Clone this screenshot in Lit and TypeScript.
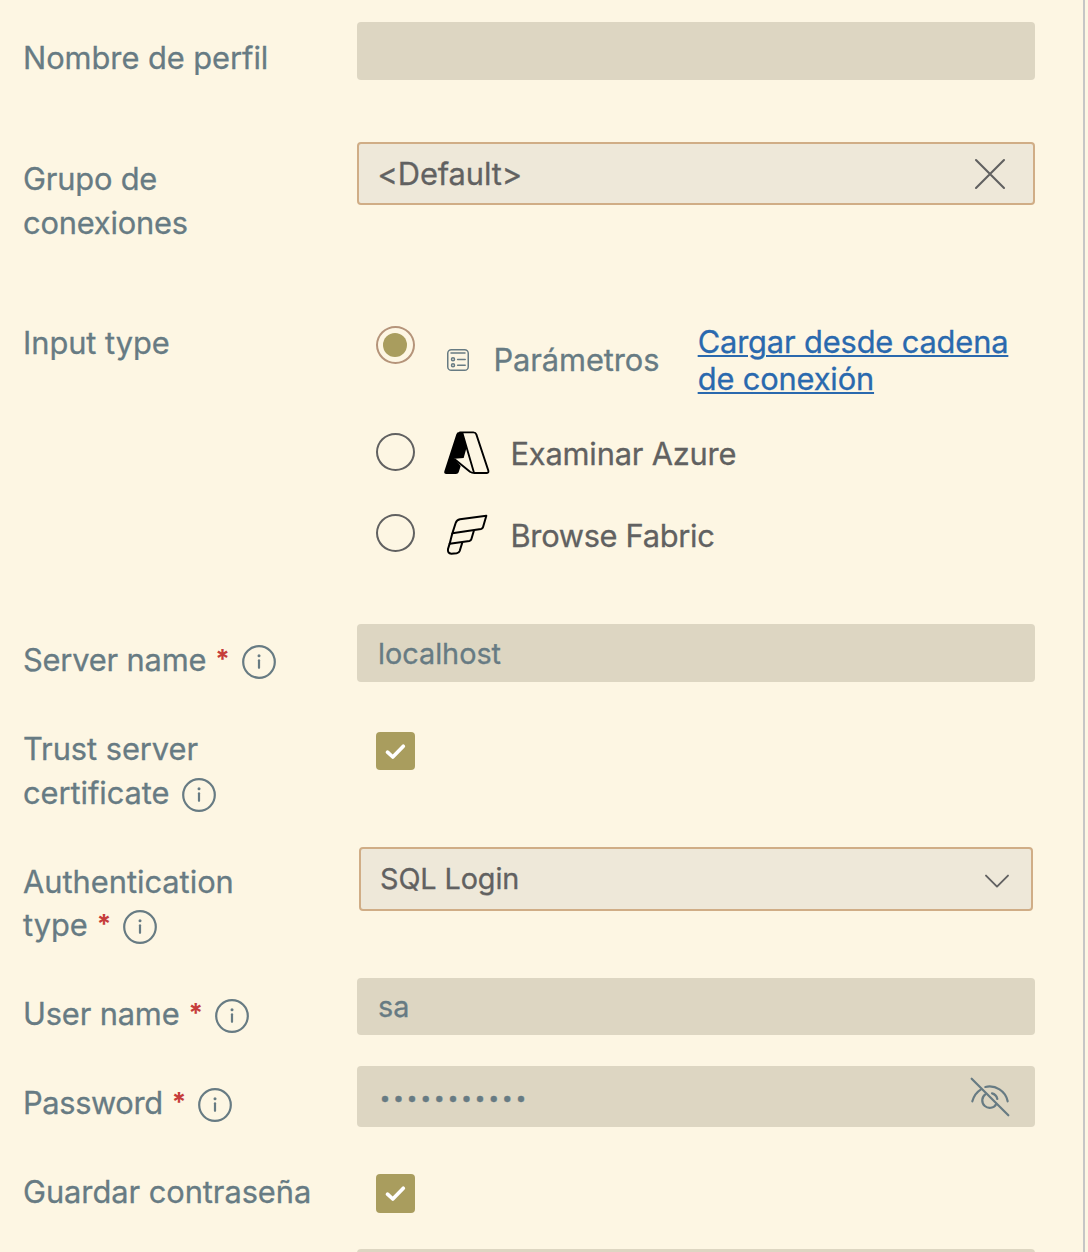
import { LitElement, html, css, nothing, TemplateResult } from "lit";
import { customElement, property } from "lit/decorators.js";

const closeIcon = html`<svg width="32" height="32" viewBox="0 0 32 32" fill="none" stroke="currentColor" stroke-width="2.100" stroke-linecap="round"><path d="M2 2 30 30M30 2 2 30" /></svg>`;

const chevronIcon = html`<svg class="chevron" width="26" height="16" viewBox="0 0 26 16" fill="none" stroke="currentColor" stroke-width="1.900" stroke-linecap="round" stroke-linejoin="round"><path d="M2 2.600 13 13.600 24 2.600" /></svg>`;

const eyeOffIcon = html`<svg width="40" height="40" viewBox="0 0 120 120" fill="none" stroke="currentColor" stroke-width="6.600" stroke-linecap="round">
  <path d="M5 5 115 115" />
  <path d="M7 73C11 58 20 45 33 37" />
  <path d="M46 30C76 23 107 42 113 73" />
  <path d="M46 52A22.500 22.500 0 1 0 79 81" />
  <path d="M66 49C74 51 80 57 82 66" />
</svg>`;

const formIcon = html`<svg width="22" height="22" viewBox="0 0 22 22" fill="none" stroke="currentColor" stroke-width="1.500" stroke-linecap="round">
  <rect x="0.750" y="0.750" width="20.500" height="20.500" rx="3.600" />
  <path d="M4 3.900H18M10.600 10.400H18.200M10.600 16.300H18.200" />
  <circle cx="6" cy="10.300" r="1.500" />
  <circle cx="6" cy="16.300" r="1.500" />
</svg>`;

const azureIcon = html`<svg width="47" height="45" viewBox="250 360 141 135">
  <path d="M299 366H308L321 412 312 444 284 446 303 468 297 487Q295 492 289 492H260Q252 492 254 484L290 373Q292 366 299 366Z" fill="#000" />
  <path d="M299 367H341Q348 367 350 373L386 482Q388 489 380 489H344Q337 489 331 485L284 447M308 368 343 488" fill="none" stroke="#000" stroke-width="5.600" stroke-linejoin="round" />
</svg>`;

const fabricIcon = html`<svg width="42" height="43" viewBox="258 610 126 129" fill="none" stroke="#000" stroke-width="6" stroke-linejoin="round">
  <path d="M379 618 300 629Q290 631 287 640L277 671 363 658Q368 657 369 653Z" />
  <path d="M277 671 269 702 328 694Q333 693 334 689L342 662" />
  <path d="M269 702 264 718Q262 731 274 732L290 731Q297 730 299 724L307 698" />
</svg>`;

@customElement("info-icon")
export class InfoIcon extends LitElement {
  static styles = css`
    :host { display: inline-block; width: 34px; height: 34px; margin-left: 12px; vertical-align: -8px; line-height: 0; letter-spacing: 0; }
  `;
  render() {
    return html`<svg width="34" height="34" viewBox="0 0 34 34">
      <circle cx="17" cy="17" r="15.800" fill="none" stroke="currentColor" stroke-width="2.200" />
      <circle cx="17" cy="10.700" r="1.500" fill="currentColor" />
      <path d="M17 15.300V22.800" stroke="currentColor" stroke-width="2.200" stroke-linecap="round" />
    </svg>`;
  }
}

@customElement("field-label")
export class FieldLabel extends LitElement {
  @property() text = "";
  @property({ type: Boolean }) required = false;
  @property({ type: Boolean }) info = false;

  static styles = css`
    :host { display: block; width: 300px; padding-top: 14px; font-size: 30.8px; line-height: 44px; letter-spacing: -0.04px; color: #677b83; -webkit-text-stroke: 0.3px currentColor; }
    .tail { white-space: nowrap; }
    .star { display: inline-block; margin-left: 9px; color: #c63d3a; font-size: 26px; font-weight: 700; line-height: 1; letter-spacing: 0; vertical-align: 3px; height: 20px; -webkit-text-stroke: 0; }
  `;

  render() {
    const words = this.text.split(" ");
    const last = words.pop();
    return html`${words.join(" ")} <span class="tail">${last}${this.required
      ? html`<span class="star">*</span>`
      : nothing}${this.info ? html`<info-icon></info-icon>` : nothing}</span>`;
  }
}

@customElement("check-box")
export class CheckBox extends LitElement {
  static styles = css`
    :host { display: block; width: 39px; height: 38px; margin-left: 19px; border-radius: 4px; background: #a99d5e; }
    svg { display: block; }
  `;
  render() {
    return html`<svg width="39" height="38" viewBox="0 0 39 38" fill="none" stroke="#fff" stroke-width="3.700" stroke-linecap="round" stroke-linejoin="round"><path d="M11.500 20.200 16.800 25 27.300 14.300" /></svg>`;
  }
}

@customElement("radio-dot")
export class RadioDot extends LitElement {
  @property({ type: Boolean, reflect: true }) checked = false;
  static styles = css`
    :host { display: grid; place-items: center; box-sizing: border-box; flex: none; width: 39px; height: 38px; border: 2px solid #616161; border-radius: 50%; }
    :host([checked]) { border-color: #b5947a; }
    .dot { width: 24px; height: 24px; margin-right: 1px; border-radius: 50%; background: #a99d5e; }
  `;
  render() {
    return this.checked ? html`<span class="dot"></span>` : nothing;
  }
}

@customElement("app-root")
export class AppRoot extends LitElement {
  static styles = css`
    :host { display: block; height: 1252px; overflow: hidden; background: #fdf6e3; font-family: Inter, "Liberation Sans", sans-serif; }
    .panel { box-sizing: border-box; width: 1085px; height: 1252px; padding: 22px 48px 0 23px; border-right: 2px solid #c6c6c6; overflow: hidden; }
    .form { display: grid; grid-template-columns: 334px 678px; grid-template-rows: 120px 165px 317px 89px 134px 131px 88px 90px 93px 58px; align-items: start; }
    .label-group { padding-top: 15px; letter-spacing: -0.18px; }
    .label-server { letter-spacing: -0.17px; }
    .label-auth { padding-top: 12.5px; line-height: 43.5px; letter-spacing: 0; }
    .label-user { letter-spacing: -0.15px; }
    .label-password { padding-top: 15px; letter-spacing: -0.36px; }
    .field { display: flex; align-items: center; box-sizing: border-box; height: 58px; padding: 0 25px 0 21px; border-radius: 4px; background: #ddd6c2; color: #677b83; font-size: 28.8px; -webkit-text-stroke: 0.3px currentColor; }
    .field.user { height: 57px; }
    .field.secret { height: 61px; justify-content: space-between; }
    .dots { padding: 2.8px 0 0 1.4px; font-size: 19.5px; letter-spacing: 2.63px; }
    .select { justify-content: space-between; border: 2px solid #d0ad86; background: #eee8d9; color: #616161; }
    .group { height: 63px; padding: 0 27px 0 18.5px; font-size: 30.8px; letter-spacing: -0.1px; }
    .auth { height: 64px; margin: 0 2px; padding: 2px 21px 0 19px; letter-spacing: -0.1px; }
    .auth span { margin-top: -4px; }
    .auth .chevron { margin-top: 1px; }
    .check { padding-top: 19px; }
    .check.save { padding-top: 18px; }
    .save check-box { height: 39px; }
    .radios { padding: 19px 0 0 19px; color: #616161; font-size: 30.8px; line-height: 37px; -webkit-text-stroke: 0.3px currentColor; }
    .option { display: flex; align-items: center; }
    .option.params { align-items: flex-start; height: 107px; color: #677b83; }
    .params svg { margin: 23px 0 0 32px; flex: none; }
    .params span { margin: 14.500px 0 0 24.500px; letter-spacing: -0.08px; white-space: nowrap; }
    .params a { margin: -3px 0 0 38.300px; color: #2a69ae; letter-spacing: -0.14px; text-decoration: underline; text-decoration-thickness: 2px; text-underline-offset: 2px; }
    .azure { height: 38px; }
    .fabric { height: 38px; margin-top: 43px; }
    .azure svg { margin: 1px 0 0 28px; }
    .fabric svg { margin: 3px 0 0 31px; }
    .azure span { margin: 2px 0 0 20.500px; letter-spacing: -0.18px; }
    .fabric span { margin: 5px 0 0 22.500px; letter-spacing: -0.3px; }
    svg { display: block; -webkit-text-stroke: 0; }
  `;

  private row(name: string, text: string, control: TemplateResult, required = false, info = false) {
    return html`<field-label class="label-${name}" .text=${text} .required=${required} .info=${info}></field-label>${control}`;
  }

  render() {
    return html`<main class="panel"><div class="form">
      ${this.row("profile", "Nombre de perfil", html`<div class="field"></div>`)}
      ${this.row("group", "Grupo de conexiones", html`<div class="field select group"><span>&lt;Default&gt;</span>${closeIcon}</div>`)}
      ${this.row("input", "Input type", html`<div class="radios">
        <div class="option params">
          <radio-dot checked></radio-dot>${formIcon}<span>Parámetros</span>
          <a>Cargar desde cadena de conexión</a>
        </div>
        <div class="option azure"><radio-dot></radio-dot>${azureIcon}<span>Examinar Azure</span></div>
        <div class="option fabric"><radio-dot></radio-dot>${fabricIcon}<span>Browse Fabric</span></div>
      </div>`)}
      ${this.row("server", "Server name", html`<div class="field">localhost</div>`, true, true)}
      ${this.row("trust", "Trust server certificate", html`<div class="check"><check-box></check-box></div>`, false, true)}
      ${this.row("auth", "Authentication type", html`<div class="field select auth"><span>SQL Login</span>${chevronIcon}</div>`, true, true)}
      ${this.row("user", "User name", html`<div class="field user">sa</div>`, true, true)}
      ${this.row("password", "Password", html`<div class="field secret"><span class="dots">•••••••••••</span>${eyeOffIcon}</div>`, true, true)}
      ${this.row("save", "Guardar contraseña", html`<div class="check save"><check-box></check-box></div>`)}
      <span></span><div class="field"></div>
    </div></main>`;
  }
}
